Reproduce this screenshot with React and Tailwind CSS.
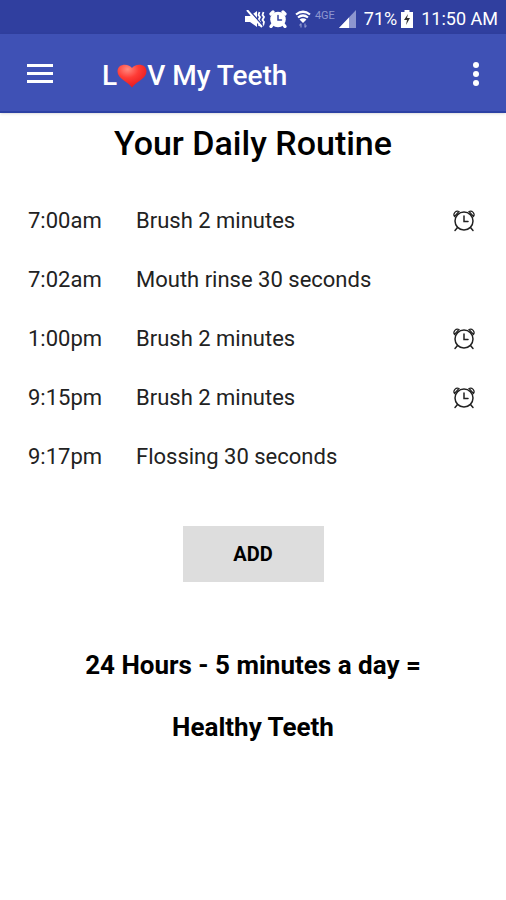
import React from "react";

const routine = [
  { time: "7:00am", task: "Brush 2 minutes", alarm: true },
  { time: "7:02am", task: "Mouth rinse 30 seconds", alarm: false },
  { time: "1:00pm", task: "Brush 2 minutes", alarm: true },
  { time: "9:15pm", task: "Brush 2 minutes", alarm: true },
  { time: "9:17pm", task: "Flossing 30 seconds", alarm: false },
];

const MutedIcon = () => (
  <svg width="20" height="18" viewBox="0 0 20 18" fill="none" stroke="#fff">
    <path d="M0 6h5l7-5v16l-7-5H0z" fill="#fff" stroke="none" />
    <path d="M14.500 2l-1 3 1.500 2-1.500 3 1.500 2-1 4M18.500 2l-1 3 1.500 2-1.500 3 1.500 2-1 4" strokeWidth="1.800" />
    <path d="M4 0l14 16" stroke="#303f9f" strokeWidth="1.500" />
    <path d="M2 0l15 17" strokeWidth="2" />
  </svg>
);

const StatusAlarmIcon = () => (
  <svg width="18" height="18" viewBox="0 0 18 18" fill="none" stroke="#fff" strokeLinecap="round">
    <path d="M2 4l2-2M16 4l-2-2M3.500 14.500l-1.500 2M14.500 14.500l1.500 2" strokeWidth="3.200" />
    <circle cx="9" cy="9.500" r="7.800" fill="#fff" stroke="none" />
    <path d="M9 5.500v4.500h3.500" stroke="#303f9f" strokeWidth="1.500" />
  </svg>
);

const WifiIcon = () => (
  <svg width="16" height="18" viewBox="0 0 16 18" fill="none" stroke="#fff">
    <path d="M1 4.500Q8-1 15 4.500" strokeWidth="2.200" />
    <path d="M3 7.500Q8 3.500 13 7.500" strokeWidth="2.200" />
    <path d="M4.500 9.500Q8 7 11.500 9.500L8 13z" fill="#fff" stroke="none" />
    <path d="M6 17.500v-4M4.500 15.500l1.500-2M10 13.500v4M10 17.500l1.500-2" stroke="#8c95d0" strokeWidth="1.200" />
  </svg>
);

const SignalIcon = () => (
  <svg width="17" height="18" viewBox="0 0 17 18">
    <path d="M0 18L17 0v18z" fill="#8d96cf" />
    <path d="M0 18L10 7.500v10.500z" fill="#fff" />
  </svg>
);

const BatteryIcon = () => (
  <svg width="12" height="18" viewBox="0 0 12 18">
    <path d="M3.500 0h5v2H12v16H0V2h3.500z" fill="#fff" />
    <path d="M7 4l-4 6h3l-1 5 4-7H6z" fill="#303030" />
  </svg>
);

const HeartIcon = () => (
  <svg width="30" height="24" viewBox="0 0 30 24" role="img" aria-label="O">
    <defs>
      <radialGradient id="heart" cx="0.350" cy="0.200" r="0.850">
        <stop offset="0" stopColor="#ff8a80" />
        <stop offset="0.450" stopColor="#ff3b35" />
        <stop offset="1" stopColor="#e3151b" />
      </radialGradient>
    </defs>
    <path
      d="M15 4C12.500-.5 .5 -1.500 .5 7.500C.5 15 11 17.500 15 23.500C19 17.500 29.500 15 29.500 7.500C29.500-1.500 17.500-.5 15 4z"
      fill="url(#heart)"
    />
  </svg>
);

const AlarmIcon = () => (
  <svg
    width="24"
    height="24"
    viewBox="0 0 24 24"
    fill="none"
    stroke="#222"
    strokeWidth="1.500"
    strokeLinecap="round"
    role="img"
    aria-label="Alarm on"
  >
    <circle cx="12" cy="12" r="9" />
    <path d="M12 7v5.500h4" />
    <path d="M2.500 7.500C.5 4.500 4 1 7 2.500zM21.500 7.500C23.500 4.500 20 1 17 2.500z" strokeWidth="1.200" />
    <path d="M5.500 18.500L3 21.500M18.500 18.500l2.500 3" />
  </svg>
);

const StatusBar = () => (
  <div className="flex h-[34px] items-center justify-end bg-[#303f9f] pt-[3px] pr-2 text-[18px] text-white">
    <MutedIcon />
    <div className="ml-1 flex items-center gap-2">
      <StatusAlarmIcon />
      <WifiIcon />
    </div>
    <span className="ml-1 pb-1 text-[11px] text-[#8d96cf]">4GE</span>
    <div className="mr-2 ml-1">
      <SignalIcon />
    </div>
    <span className="mr-1">71%</span>
    <BatteryIcon />
    <span className="ml-2">11:50 AM</span>
  </div>
);

const AppBar = () => (
  <header className="flex h-[79px] items-center border-b-2 border-[#2c41a4] bg-[#3f51b5] px-6 pt-[2px] text-white shadow">
    <button type="button" aria-label="Open menu" className="px-[3px] py-3">
      <svg width="26" height="20" viewBox="0 0 26 20" fill="#fff">
        <path d="M0 0h26v3H0zM0 8h26v3H0zM0 16h26v3H0z" />
      </svg>
    </button>
    <div className="ml-[46px] flex flex-1 items-center pt-1 text-[28px] font-medium">
      <span>L</span>
      <HeartIcon />
      <span>V My Teeth</span>
    </div>
    <button type="button" aria-label="More options" className="py-3">
      <svg width="12" height="24" viewBox="0 0 12 24" fill="#fff">
        <circle cx="6" cy="3" r="3" />
        <circle cx="6" cy="12" r="3" />
        <circle cx="6" cy="21" r="3" />
      </svg>
    </button>
  </header>
);

const App = () => {
  return (
    <div className="min-h-screen bg-white font-['Roboto',sans-serif] text-black">
      <StatusBar />
      <AppBar />

      <main>
        <h1 className="pt-2 text-center text-[34px] leading-[44px] font-medium">
          Your Daily Routine
        </h1>

        <table className="mt-[26px] w-full text-left text-[22px] text-[#222]">
          <tbody>
            {routine.map((item) => (
              <tr key={item.time} className="h-[59px]">
                <td className="w-[136px] pl-7">{item.time}</td>
                <td>{item.task}</td>
                <td className="pr-[30px]">
                  {item.alarm && (
                    <div className="flex justify-end">
                      <AlarmIcon />
                    </div>
                  )}
                </td>
              </tr>
            ))}
          </tbody>
        </table>

        <div className="mt-10 flex justify-center">
          <button type="button" className="h-14 w-[141px] bg-[#dddddd] text-xl font-bold">
            ADD
          </button>
        </div>

        <p className="mt-[52px] text-center text-[26px] leading-[62px] font-bold">
          24 Hours - 5 minutes a day =
          <br />
          Healthy Teeth
        </p>
      </main>
    </div>
  );
};

export default App;
